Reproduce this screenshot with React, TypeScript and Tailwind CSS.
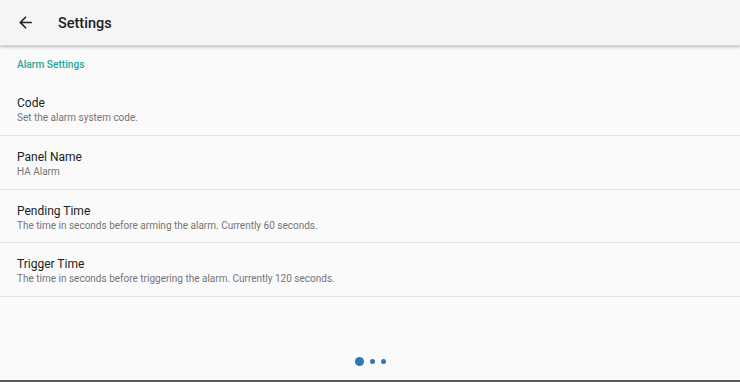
import React from "react";

const rows = [
  { t: "Code", s: "Set the alarm system code.", h: "h-[54px]" },
  { t: "Panel Name", s: "HA Alarm", h: "h-[54px]" },
  { t: "Pending Time", s: "The time in seconds before arming the alarm. Currently 60 seconds.", h: "h-[53px]" },
  { t: "Trigger Time", s: "The time in seconds before triggering the alarm. Currently 120 seconds.", h: "h-[54px]" },
];

export default function App() {
  return (
    <div
      className="w-[740px] h-[382px] bg-[#fafafa] flex flex-col overflow-hidden"
      style={{ fontFamily: "Roboto, 'Liberation Sans', sans-serif" }}
    >
      <div className="h-[46px] shrink-0 bg-[#f5f5f5] flex items-center shadow-[0_1px_3px_rgba(0,0,0,0.25)] border-b border-[#d6d6d6] relative z-10">
        <svg width="19" height="19" viewBox="0 0 24 24" className="ml-[16px] mt-[0px]" fill="#222">
          <path d="M20 11H7.83l5.59-5.59L12 4l-8 8 8 8 1.41-1.41L7.83 13H20v-2z" />
        </svg>
        <div className="ml-[23px] mt-[3px] text-[14.5px] font-medium text-[#212121]">Settings</div>
      </div>
      <div className="h-[36px] shrink-0 flex items-center pl-[17px] pt-[2px] text-[10.2px] font-medium text-[#26a69a]">
        Alarm Settings
      </div>
      {rows.map((r) => (
        <div key={r.t} className={`${r.h} shrink-0 border-b border-[#e2e2e2] pl-[17px] pt-[13px]`}>
          <div className="text-[12px] leading-[16px] text-[#212121]">{r.t}</div>
          <div className="mt-[1px] text-[10px] leading-[12px] text-[#757575]">{r.s}</div>
        </div>
      ))}
      <div className="flex-1" />
      <div className="h-[23px] shrink-0 flex items-start justify-center">
        <div className="flex items-center gap-[6px]">
          <div className="w-[9px] h-[9px] rounded-full bg-[#2f78b8]" />
          <div className="w-[5px] h-[5px] rounded-full bg-[#2f78b8]" />
          <div className="w-[5px] h-[5px] rounded-full bg-[#2f78b8]" />
        </div>
      </div>
      <div className="h-[2px] shrink-0 bg-[#5a5a5a]" />
    </div>
  );
}
